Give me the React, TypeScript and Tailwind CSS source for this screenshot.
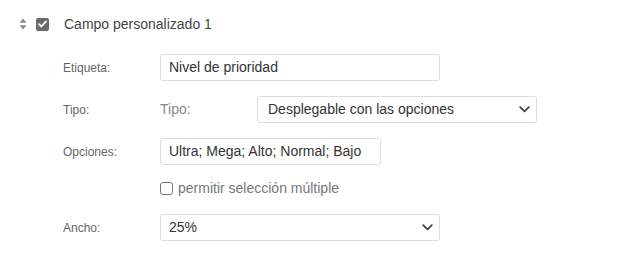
import React from "react";

const Chevron = () => (
  <svg width="11" height="7" viewBox="0 0 11 7" fill="none">
    <path d="M1.2 1.2 L5.5 5.4 L9.8 1.2" stroke="#444" strokeWidth="1.8" strokeLinecap="round" strokeLinejoin="round" />
  </svg>
);

const SortIcon = () => (
  <svg width="8" height="12" viewBox="0 0 8 12">
    <path d="M4 0.5 L7.5 4.8 L0.5 4.8 Z" fill="#8a8a8a" />
    <path d="M4 11.5 L7.5 7.2 L0.5 7.2 Z" fill="#8a8a8a" />
  </svg>
);

export default function App() {
  return (
    <div className="w-[624px] h-[264px] bg-white text-[#333] font-['Liberation_Sans'] overflow-hidden">
      <div className="flex items-center h-6 mt-3 pl-[19px]">
        <SortIcon />
        <div className="ml-[9px] w-[13px] h-[13px] rounded-[2px] bg-[#6b6b6b] flex items-center justify-center">
          <svg width="9" height="8" viewBox="0 0 9 8">
            <path d="M1 4.2 L3.4 6.5 L8 1.4" stroke="#fff" strokeWidth="1.8" fill="none" strokeLinecap="round" strokeLinejoin="round" />
          </svg>
        </div>
        <span className="ml-[15px] text-[14px] text-[#444]">Campo personalizado 1</span>
      </div>

      <div className="pl-[63px] mt-[18px] flex flex-col">
        <div className="flex items-center h-[27px]">
          <span className="w-[97px] text-[12px] text-[#666]">Etiqueta:</span>
          <div className="w-[280px] h-[27px] border border-[#dedede] rounded-[3px] flex items-center px-[8px] text-[14px] text-[#333]">
            Nivel de prioridad
          </div>
        </div>

        <div className="flex items-center h-[27px] mt-[15px]">
          <span className="w-[97px] text-[12px] text-[#666]">Tipo:</span>
          <span className="w-[97px] text-[14px] text-[#888]">Tipo:</span>
          <div className="w-[280px] h-[27px] border border-[#dedede] rounded-[3px] flex items-center justify-between pl-[10px] pr-[6px] text-[14px] text-[#333]">
            <span>Desplegable con las opciones</span>
            <Chevron />
          </div>
        </div>

        <div className="flex items-center h-[27px] mt-[15px]">
          <span className="w-[97px] text-[12px] text-[#666]">Opciones:</span>
          <div className="w-[221px] h-[27px] border border-[#dedede] rounded-[3px] flex items-center px-[8px] text-[14px] text-[#333]">
            Ultra; Mega; Alto; Normal; Bajo
          </div>
        </div>

        <div className="flex items-center h-[20px] mt-[13px] pl-[97px]">
          <div className="w-[13px] h-[13px] border border-[#777] rounded-[3px] bg-white" />
          <span className="ml-[5px] text-[14px] text-[#777]">permitir selección múltiple</span>
        </div>

        <div className="flex items-center h-[27px] mt-[16px]">
          <span className="w-[97px] text-[12px] text-[#666]">Ancho:</span>
          <div className="w-[280px] h-[27px] border border-[#dedede] rounded-[3px] flex items-center justify-between pl-[8px] pr-[6px] text-[14px] text-[#333]">
            <span>25%</span>
            <Chevron />
          </div>
        </div>
      </div>
    </div>
  );
}
